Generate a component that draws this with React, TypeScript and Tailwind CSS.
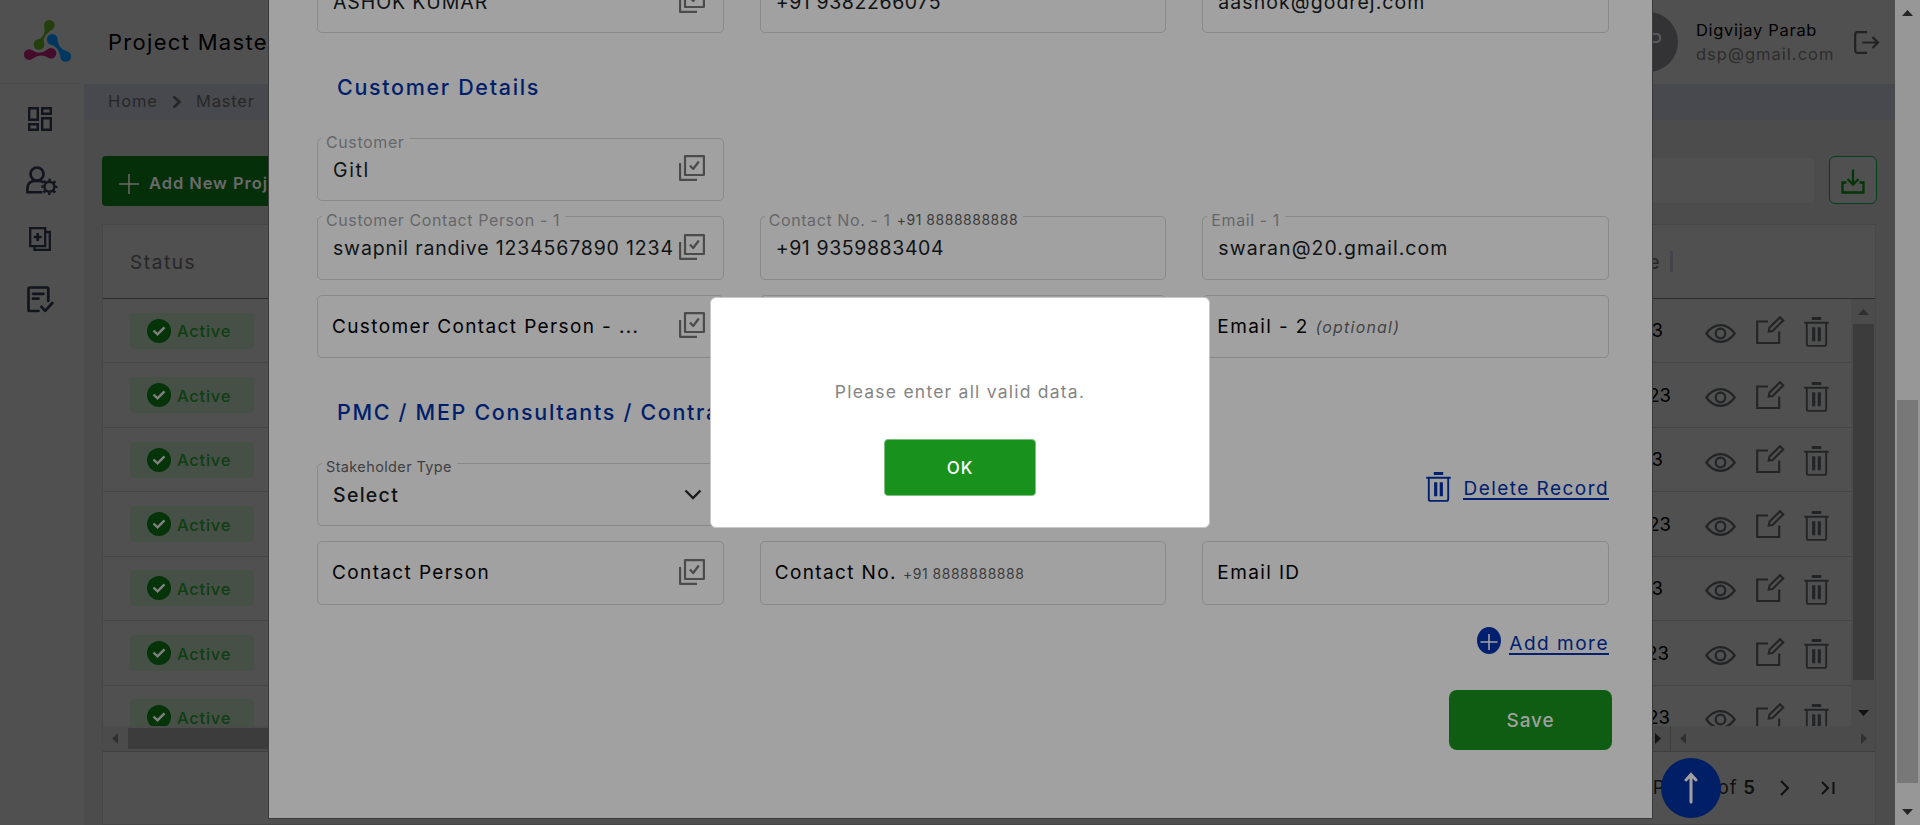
import React from 'react';

type IconProps = { className?: string };

function Logo() {
  return (
    <svg width="50" height="46" viewBox="22 18 50 46" className="block">
      <g fill="#223f0c">
        <circle cx="49.3" cy="25.3" r="5.3" />
        <circle cx="39" cy="44.4" r="5.3" />
        <path d="M44.4 27.500Q46 34 39.500 39.2L43.700 42.2Q43 36 50.500 30.500Z" />
      </g>
      <g fill="#003761">
        <circle cx="52.3" cy="39.4" r="5.4" />
        <circle cx="65.7" cy="56.4" r="5.4" />
        <path d="M50.500 44.500Q57.500 46 60.4 55.400L66 51Q58.800 48.500 57.500 40.500Z" />
      </g>
      <g fill="#430c2a">
        <circle cx="29.2" cy="54.6" r="5.3" />
        <circle cx="51" cy="53.2" r="5.3" />
        <path d="M32.500 50.500Q40 55.5 47.500 49.500L48 57.500Q40 52.800 32.500 58.700Z" />
      </g>
    </svg>
  );
}

function DashboardIcon() {
  return (
    <svg width="24" height="24" viewBox="0 0 24 24" fill="none" stroke="#12151e" strokeWidth="2.400" className="block">
      <path d="M1.200 1.200h8.600v11.600H1.200zM14.200 1.200h8.600v5.600h-8.600zM14.200 11.200h8.600v11.600h-8.600zM1.200 17.200h8.600v5.600H1.200z" />
    </svg>
  );
}

function UserGearIcon() {
  return (
    <svg width="32" height="29" viewBox="0 0 32 29" fill="none" stroke="#12151e" className="block">
      <circle cx="11" cy="8" r="6.500" strokeWidth="2.700" />
      <path d="M16.500 26.300H1.400V23q0-8 7.500-8h4.500q2.500 0 4.200 1.500" strokeWidth="2.600" />
      <circle cx="23.400" cy="20.800" r="5" strokeWidth="2.400" />
      <circle cx="23.400" cy="20.800" r="6.900" strokeWidth="2.400" strokeDasharray="2.500 2.920" strokeDashoffset="1.250" />
    </svg>
  );
}

function CopyPlusIcon() {
  return (
    <svg width="22" height="24" viewBox="0 0 22 24" fill="none" stroke="#12151e" strokeWidth="2.300" className="block">
      <path d="M1.200 1.200h15v18h-15zM17 5h3.800v17.800H5.500V19.500" />
      <path d="M8.700 6v8M4.700 10h8" strokeWidth="2.600" />
    </svg>
  );
}

function ListCheckIcon() {
  return (
    <svg width="27" height="27" viewBox="0 0 27 27" fill="none" stroke="#12151e" strokeWidth="2.700" strokeLinecap="round" strokeLinejoin="round" className="block">
      <path d="M11.500 25H2.800q-1.300 0-1.300-1.300V3q0-1.500 1.300-1.500H20q1.300 0 1.300 1.500v12M6 7.800h10.500M6 12.700h5.500M14.500 20.800l3.700 4L25.300 17" />
    </svg>
  );
}

function LogoutIcon() {
  return (
    <svg width="26" height="23" viewBox="0 0 26 23" fill="none" stroke="#222222" strokeWidth="2.200" className="block">
      <path d="M13 1.200H3.500Q1.200 1.200 1.200 3.500v16q0 2.300 2.300 2.300H13M8.500 11.500h15M18.500 6l5.500 5.500-5.500 5.500" />
    </svg>
  );
}

function DownloadIcon() {
  return (
    <svg width="24" height="25" viewBox="0 0 24 25" fill="none" stroke="#053507" strokeWidth="2.300" className="block">
      <path d="M12 .500v15M6.500 10l5.500 5.500 5.500-5.500M5.500 13.500H1.500v10h21v-10h-4" />
    </svg>
  );
}

function EyeIcon() {
  return (
    <svg width="31" height="19" viewBox="0 0 31 19" fill="none" stroke="#222426" strokeWidth="2.200" className="block">
      <path d="M1.300 9.500C5 4.500 10 1.200 15.500 1.200S26 4.500 29.700 9.500C26 14.500 21 17.800 15.500 17.800S5 14.500 1.300 9.500Z" />
      <circle cx="15.500" cy="9.500" r="4.800" />
    </svg>
  );
}

function EditIcon() {
  return (
    <svg width="29" height="29" viewBox="0 0 29 29" fill="none" stroke="#222426" strokeWidth="2.100" className="block">
      <path d="M12 5.500H1.200V27H23.200V15.500" />
      <path d="M12.800 15.500l.600-3.800L24 1.200l3.200 3.200-10.600 10.600z" />
    </svg>
  );
}

function TrashIcon({ className }: IconProps) {
  return (
    <svg width="25" height="30" viewBox="0 0 25 30" fill="none" stroke="currentColor" strokeWidth="1.900" className={className}>
      <path d="M.300 5.800h24.400M2.800 5.800V27q0 1.900 1.900 1.900h15.600q1.900 0 1.900-1.900V5.800" />
      <path d="M7.800 1.500h9.400" strokeWidth="3" />
      <path d="M9.700 10.200v14M15.300 10.200v14" strokeWidth="3.200" />
    </svg>
  );
}

function CopyCheckIcon() {
  return (
    <svg width="26" height="26" viewBox="0 0 26 26" fill="none" stroke="#4b4b4b" strokeWidth="2.200" strokeLinejoin="round" className="block">
      <path d="M6 1.100h18.900V20H6zM1.100 8v16.900H18M11 10.500l3.200 3.500 5.600-7.500" />
    </svg>
  );
}

function Arrow({ dir, className }: { dir: 'up' | 'down' | 'left' | 'right'; className: string }) {
  const points = {
    up: '0,6 5.500,0 11,6',
    down: '0,0 11,0 5.500,6',
    left: '6,0 6,11 0,5.500',
    right: '0,0 0,11 6,5.500',
  };
  const horizontal = dir === 'left' || dir === 'right';
  return (
    <svg width={horizontal ? 6 : 11} height={horizontal ? 11 : 6} className={className}>
      <polygon points={points[dir]} fill="currentColor" />
    </svg>
  );
}

function Sidebar() {
  return (
    <aside className="flex h-full w-[84px] shrink-0 flex-col bg-[#505050]">
      <div className="mr-1 h-[84px] border-b border-[#494949] pl-[22px] pt-[18px]">
        <Logo />
      </div>
      <nav className="flex flex-col">
        <div className="pl-7 pt-[23px]"><DashboardIcon /></div>
        <div className="pl-[26px] pt-[35px]"><UserGearIcon /></div>
        <div className="pl-[29px] pt-8"><CopyPlusIcon /></div>
        <div className="pl-[27px] pt-[35px]"><ListCheckIcon /></div>
      </nav>
    </aside>
  );
}

function Header() {
  return (
    <header className="flex h-[84px] items-center justify-between bg-[#505050] pl-6 pr-[15px]">
      <h1 className="text-[22px] tracking-[1.3px] text-black">Project Master</h1>
      <div className="flex items-center">
        <div className="flex size-[60px] items-center justify-center rounded-full bg-[#333335] text-[21px] tracking-[1px] text-[#5c5c5c]">DP</div>
        <div className="ml-[18px] w-[158px] pb-px text-[16.500px] leading-6">
          <div className="tracking-[0.680px] text-black">Digvijay Parab</div>
          <div className="tracking-[1.020px] text-[#2d2d2d]">dsp@gmail.com</div>
        </div>
        <LogoutIcon />
      </div>
    </header>
  );
}

const ROWS = [
  { date: '13/10/2023', narrow: 'pr-2' },
  { date: '12/10/2023', narrow: 'pr-0' },
  { date: '11/10/2023', narrow: 'pr-2' },
  { date: '10/10/2023', narrow: 'pr-0' },
  { date: '11/09/2023', narrow: 'pr-2' },
  { date: '08/09/2023', narrow: 'pr-[2px]' },
  { date: '06/09/2023', narrow: 'pr-px' },
];

function TableRow({ date, narrow }: { date: string; narrow: string }) {
  return (
    <div className="flex h-[64.450px] shrink-0 items-center justify-between border-b border-[#464646] pl-[27px] pr-[22px]">
      <div className="flex h-9 w-[124px] items-center rounded bg-[#465046] pl-[17px]">
        <svg width="24" height="24" viewBox="0 0 24 24" fill="none" className="block">
          <circle cx="12" cy="12" r="12" fill="#053409" />
          <path d="M6.500 11.500l4 3.800 7-7" stroke="#808080" strokeWidth="2.400" />
        </svg>
        <span className="pl-[6px] pt-[2px] text-[16.500px] font-medium tracking-[0.750px] text-[#0e3e11]">Active</span>
      </div>
      <div className="flex items-center">
        <div className={`w-[140px] pt-px text-right text-[18.500px] text-black ${narrow}`}>{date}</div>
        <div className="ml-[34px] mt-[5px]"><EyeIcon /></div>
        <div className="ml-5"><EditIcon /></div>
        <TrashIcon className="ml-[19px] mt-[3px] block text-[#222426]" />
      </div>
    </div>
  );
}

function DataTable() {
  return (
    <section className="mt-[18px] flex h-[601px] w-[1774px] flex-col border border-[#474747] bg-[#505050]">
      <div className="flex h-[74px] shrink-0 items-center justify-between border-b border-[#2c2c2c] pl-[27px] pr-[202px] text-[19px] text-[#272727]">
        <span className="pt-[3px] tracking-[1.570px]">Status</span>
        <div className="flex items-center gap-[9px]">
          <span className="pt-[3px] tracking-[1.300px]">End Date</span>
          <span className="h-[21px] w-[3px] bg-[#44454c]" />
        </div>
      </div>
      <div className="flex h-[427px] shrink-0">
        <div className="flex flex-1 flex-col overflow-hidden">
          {ROWS.map((r) => <TableRow key={r.date} {...r} />)}
        </div>
        <div className="flex w-[24px] flex-col items-center bg-[#4b4b4b]">
          <Arrow dir="up" className="mt-[10px] text-[#303030]" />
          <div className="mt-[9px] h-[356px] w-[21px] bg-[#3c3c3c]" />
          <Arrow dir="down" className="mt-[30px] text-[#121212]" />
        </div>
      </div>
      <div className="flex h-[26px] shrink-0 items-center border-b border-[#3e3e3e] bg-[#4b4b4b]">
        <Arrow dir="left" className="ml-[9px] text-[#303030]" />
        <div className="ml-[10px] h-[21px] w-[1500px] bg-[#3c3c3c]" />
        <Arrow dir="right" className="ml-[27px] text-[#151515]" />
        <div className="ml-[9px] h-full w-px bg-[#3e3e3e]" />
        <Arrow dir="left" className="ml-[9px] text-[#303030]" />
        <Arrow dir="right" className="ml-[175px] text-[#303030]" />
      </div>
      <div className="flex h-[73px] items-center justify-end pr-[40px] text-[18.500px] text-[#111]">
        <span className="mr-2">Page 1</span>
        <span className="mr-[6px] tracking-[0.800px]">of</span>
        <b className="font-semibold">5</b>
        <svg width="10" height="18" viewBox="0 0 10 18" fill="none" stroke="currentColor" strokeWidth="2" className="ml-[25px]">
          <path d="M1 2l7 7-7 7" />
        </svg>
        <svg width="14" height="14" viewBox="0 0 14 14" fill="none" stroke="currentColor" strokeWidth="2" className="ml-[31px]">
          <path d="M1 1l6 6-6 6M12.500 1v12" />
        </svg>
      </div>
    </section>
  );
}

function Page() {
  return (
    <div className="flex h-full w-[1895px]">
      <Sidebar />
      <main className="flex flex-1 flex-col bg-[#4c4c4c]">
        <Header />
        <div className="flex h-[36px] shrink-0 items-center bg-[#48494e] pl-6 text-[16.500px] text-[#272727]">
          <span className="-mt-px tracking-[0.920px]">Home</span>
          <svg width="10" height="14" viewBox="0 0 10 14" fill="none" stroke="#262626" strokeWidth="2.600" className="ml-[14px]">
            <path d="M1.500 1.500L7.500 7l-6 5.500" />
          </svg>
          <span className="-mt-px ml-[14px] tracking-[0.810px]">Master</span>
        </div>
        <div className="flex flex-col pl-[18px]">
          <div className="mt-9 flex h-[50px] justify-between pr-[18px]">
            <div className="flex w-[230px] items-center rounded bg-[#052f09] pl-[17px] text-[16.500px] font-semibold tracking-[0.930px] text-[#6a6a6a]">
              <svg width="20" height="20" viewBox="0 0 20 20" stroke="#6a6a6a" strokeWidth="1.500" className="mr-[10px] mt-[5px]">
                <path d="M10 0v20M0 10h20" />
              </svg>
              <span className="pt-1">Add New Project</span>
            </div>
            <div className="flex gap-[14px]">
              <div className="mt-px h-[47px] w-[400px] rounded border border-[#4a4a4a] bg-[#505050]" />
              <div className="flex size-12 items-center justify-center rounded-md border border-[#00411c] bg-[#505050] pt-[2px]">
                <DownloadIcon />
              </div>
            </div>
          </div>
          <DataTable />
        </div>
      </main>
    </div>
  );
}

type FieldProps = {
  label?: React.ReactNode;
  value?: string;
  placeholder?: React.ReactNode;
  picker?: boolean;
  select?: boolean;
  tracking?: string;
  small?: boolean;
};

function Field({ label, value, placeholder, picker, select, tracking, small }: FieldProps) {
  return (
    <div className="relative flex items-center justify-between rounded-[5px] border border-[#898989] pl-[15px] pr-[18px]">
      {label && (
        <span className={`absolute left-1 -top-[7px] flex items-center whitespace-pre bg-[#a1a1a1] pl-1 pr-[5px] leading-5 ${small ? 'text-[14.500px] tracking-[0.370px] text-[#3f4042]' : 'text-[16px] tracking-[0.600px] text-[#66676a]'}`}>
          {label}
        </span>
      )}
      {value ? (
        <span className={`w-0 whitespace-nowrap pt-[2px] text-[19.500px] text-[#101315] ${select ? 'font-medium' : ''} ${tracking ?? ''}`}>{value}</span>
      ) : (
        <span className="-ml-px w-0 whitespace-nowrap pt-px text-[19px] tracking-[1.380px] text-black">{placeholder}</span>
      )}
      {picker && <div className="-mt-[3px]"><CopyCheckIcon /></div>}
      {select && (
        <svg width="18" height="12" viewBox="0 0 18 12" fill="none" stroke="#1b1d20" strokeWidth="2.400" className="mr-[3px]">
          <path d="M1.500 1.500L9 9l7.500-7.500" />
        </svg>
      )}
    </div>
  );
}

function PhoneHint() {
  return <span className="ml-[6px] text-[14px] tracking-[0.520px] text-[#3c3c3c]">+91 8888888888</span>;
}

function SectionTitle({ children }: { children: React.ReactNode }) {
  return (
    <h2 className="flex h-[105px] items-center pl-5 pt-[3px] text-[21.500px] font-medium tracking-[1.670px] text-[#001e6a]">{children}</h2>
  );
}

function ProjectForm() {
  return (
    <div className="absolute left-[268px] top-0 h-[819px] w-[1385px] overflow-hidden border border-t-0 border-[#3a3a3a] bg-[#a1a1a1] pl-12 pr-[43px]">
      <div className="-mt-[30px] grid h-[63px] grid-cols-3 gap-9">
        <Field value="ASHOK KUMAR" picker tracking="tracking-[0.900px]" />
        <Field value="+91 9382266075" tracking="tracking-[0.600px]" />
        <Field value="aashok@godrej.com" tracking="tracking-[1.050px]" />
      </div>
      <SectionTitle>Customer Details</SectionTitle>
      <div className="grid h-[63px] grid-cols-3 gap-9">
        <Field label="Customer" value="Gitl" picker tracking="tracking-[1.600px]" />
      </div>
      <div className="mt-[15px] grid h-16 grid-cols-3 gap-9">
        <Field label="Customer Contact Person - 1" value="swapnil randive 1234567890 1234" picker tracking="tracking-[0.830px]" />
        <Field label={<>Contact No. - 1<PhoneHint /></>} value="+91 9359883404" tracking="tracking-[0.600px]" />
        <Field label="Email - 1" value="swaran@20.gmail.com" tracking="tracking-[1.050px]" />
      </div>
      <div className="mt-[15px] grid h-[63px] grid-cols-3 gap-9">
        <Field placeholder="Customer Contact Person - ..." picker />
        <Field placeholder={<>Contact No. - 2 <PhoneHint /></>} />
        <Field placeholder={<>Email - 2 <i className="text-[16px] tracking-[1.200px] text-[#444]">(optional)</i></>} />
      </div>
      <SectionTitle>PMC / MEP Consultants / Contractors</SectionTitle>
      <div className="grid h-[63px] grid-cols-3 gap-9">
        <Field label="Stakeholder Type" small value="Select" select tracking="tracking-[1.300px]" />
        <div />
        <div className="flex items-start justify-end text-[#00206f]">
          <TrashIcon className="mt-[9px]" />
          <span className="ml-3 mt-[13px] h-6 border-b-2 border-[#00206f] pl-px text-[19px] leading-[26px] tracking-[1.440px]">Delete Record</span>
        </div>
      </div>
      <div className="mt-[15px] grid h-16 grid-cols-3 gap-9">
        <Field placeholder="Contact Person" picker />
        <Field placeholder={<>Contact No.<PhoneHint /></>} />
        <Field placeholder="Email ID" />
      </div>
      <div className="flex justify-end pt-[22px] text-[#00206f]">
        <svg width="24" height="27" viewBox="0 0 24 27" className="block">
          <ellipse cx="12" cy="13.500" rx="12" ry="13.500" fill="#00206f" />
          <path d="M12 7v16M3.500 15h17" stroke="#a1a1a1" strokeWidth="1.600" />
        </svg>
        <span className="ml-2 mt-1 h-6 border-b-2 border-[#00206f] text-[19px] leading-[25px] tracking-[1.500px]">Add more</span>
      </div>
      <div className="-mr-[3px] mt-[35px] flex justify-end">
        <button className="h-[60px] w-[163px] rounded-lg bg-[#0e5d12] pt-[2px] text-[19px] font-medium tracking-[0.840px] text-[#a1a1a1]">Save</button>
      </div>
    </div>
  );
}

function AlertDialog() {
  return (
    <div className="absolute left-[710px] top-[297px] flex h-[231px] w-[500px] flex-col items-center rounded-md border border-[#c8c8c8] bg-white">
      <p className="mt-[82px] text-[17.500px] leading-6 tracking-[1.230px] text-[#858585]">Please enter all valid data.</p>
      <button className="mt-[35px] h-[57px] w-[152px] rounded border border-[#7cc07f] bg-[#18911d] pt-[3px] text-[17px] font-medium tracking-[1px] text-white">OK</button>
    </div>
  );
}

export default function App() {
  return (
    <div className="relative flex h-[825px] w-[1920px] overflow-hidden bg-[#4c4c4c] font-['Inter',sans-serif]">
      <Page />
      <div className="flex w-[25px] flex-col items-center bg-[#979797]">
        <Arrow dir="up" className="mt-[10px] text-[#242424]" />
        <div className="mt-[384px] h-[383px] w-[21px] bg-[#787878]" />
        <Arrow dir="down" className="mt-[26px] text-[#242424]" />
      </div>
      <ProjectForm />
      <button className="absolute left-[1661px] top-[758px] flex size-[60px] items-center justify-center rounded-full bg-[#001f66]">
        <svg width="14" height="32" viewBox="0 0 14 32" fill="none" stroke="#a1a1a1" strokeWidth="3" strokeLinecap="round">
          <path d="M7 30V3M2 8l5-5.500L12 8" />
        </svg>
      </button>
      <AlertDialog />
    </div>
  );
}
